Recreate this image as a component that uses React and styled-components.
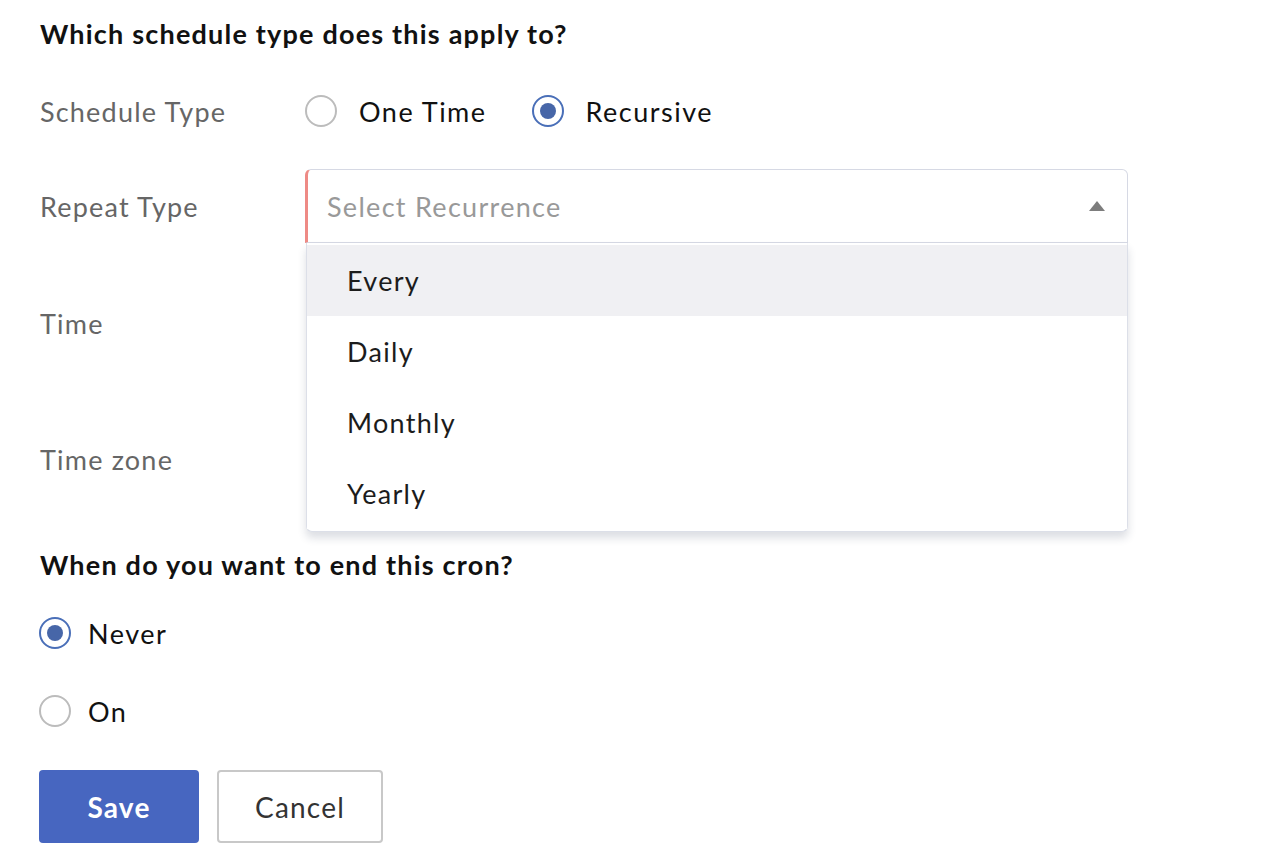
import styled, { createGlobalStyle } from "styled-components";

const GlobalStyle = createGlobalStyle`
  body {
    margin: 0;
    background: #fff;
    font-family: Lato, "Open Sans", sans-serif;
    color: #111;
  }
`;

const Page = styled.div`
  padding: 19px 40px 0 40px;
  display: flex;
  flex-direction: column;
`;

const Heading = styled.h2`
  margin: ${(p) => p.$mt || 0}px 0 0 0;
  font-size: 27px;
  letter-spacing: 1.2px;
  line-height: 30px;
  font-weight: 700;
  color: #111;
`;

const Row = styled.div`
  display: flex;
  align-items: center;
  margin-top: ${(p) => p.$mt}px;
  min-height: ${(p) => p.$h}px;
`;

const Label = styled.div`
  width: 265px;
  flex-shrink: 0;
  font-size: 27px;
  letter-spacing: 1.2px;
  color: #666;
`;

const RadioGroup = styled.div`
  display: flex;
  align-items: center;
  gap: 45px;
`;

const RadioItem = styled.label`
  display: flex;
  align-items: center;
  gap: ${(p) => p.$gap}px;
  font-size: 27px;
  letter-spacing: 1.5px;
  color: #111;
  margin-left: ${(p) => p.$ml || 0}px;
`;

const RadioCircle = styled.span`
  width: 32px;
  height: 32px;
  box-sizing: border-box;
  border-radius: 50%;
  border: 2px solid ${(p) => (p.$checked ? "#4a6fb8" : "#bcbcbc")};
  display: flex;
  align-items: center;
  justify-content: center;
  &::after {
    content: "";
    width: 16px;
    height: 16px;
    border-radius: 50%;
    background: #4766a8;
    display: ${(p) => (p.$checked ? "block" : "none")};
  }
`;

const SelectWrap = styled.div`
  position: relative;
  width: 823px;
`;

const SelectBox = styled.div`
  height: 74px;
  box-sizing: border-box;
  border: 1px solid #d6d9e4;
  border-left: 3px solid #ee8a85;
  border-radius: 6px 6px 0 0;
  display: flex;
  align-items: center;
  justify-content: space-between;
  padding: 0 22px 0 19px;
  font-size: 27px;
  letter-spacing: 1.3px;
  color: #999;
`;

const Caret = styled.span`
  width: 0;
  height: 0;
  border-left: 8px solid transparent;
  border-right: 8px solid transparent;
  border-bottom: 10px solid #7d7d7d;
`;

const Menu = styled.ul`
  position: absolute;
  top: 74px;
  left: 1px;
  right: 0;
  margin: 0;
  padding: 2px 0;
  list-style: none;
  background: #fff;
  border: 1px solid #dcdfe8;
  border-top: none;
  border-radius: 0 0 6px 6px;
  box-shadow: 0 6px 8px rgba(40, 50, 80, 0.16);
  z-index: 5;
`;

const MenuItem = styled.li`
  height: 71px;
  display: flex;
  align-items: center;
  padding-left: 40px;
  font-size: 27px;
  letter-spacing: 1.3px;
  color: #1c1c1c;
  background: ${(p) => (p.$active ? "#f0f0f3" : "#fff")};
`;

const ButtonRow = styled.div`
  display: flex;
  gap: 18px;
  margin-top: 39px;
  margin-left: -1px;
`;

const Button = styled.button`
  height: 73px;
  box-sizing: border-box;
  font-family: Lato, "Open Sans", sans-serif;
  font-size: 28px;
  letter-spacing: 1.2px;
  border-radius: 4px;
  cursor: pointer;
  width: ${(p) => p.$w}px;
  background: ${(p) => (p.$primary ? "#4766c0" : "#fff")};
  color: ${(p) => (p.$primary ? "#fff" : "#333")};
  border: ${(p) => (p.$primary ? "none" : "2px solid #c8c8c8")};
  font-weight: ${(p) => (p.$primary ? 700 : 400)};
`;

const Radio = ({ checked, children, ml, gap = 22 }) => (
  <RadioItem $ml={ml} $gap={gap}>
    <RadioCircle $checked={checked} />
    {children}
  </RadioItem>
);

export default function App() {
  const options = ["Every", "Daily", "Monthly", "Yearly"];
  return (
    <>
      <GlobalStyle />
      <Page>
        <Heading>Which schedule type does this apply to?</Heading>
        <Row $mt={42} $h={40}>
          <Label>Schedule Type</Label>
          <RadioGroup>
            <Radio>One Time</Radio>
            <Radio checked>Recursive</Radio>
          </RadioGroup>
        </Row>
        <Row $mt={38} $h={74}>
          <Label>Repeat Type</Label>
          <SelectWrap>
            <SelectBox>
              Select Recurrence
              <Caret />
            </SelectBox>
            <Menu>
              {options.map((o, i) => (
                <MenuItem key={o} $active={i === 0}>
                  {o}
                </MenuItem>
              ))}
            </Menu>
          </SelectWrap>
        </Row>
        <Row $mt={43} $h={74}>
          <Label>Time</Label>
        </Row>
        <Row $mt={62} $h={74}>
          <Label>Time zone</Label>
        </Row>
        <Heading $mt={54}>When do you want to end this cron?</Heading>
        <Row $mt={33} $h={40}>
          <Radio ml={-1} gap={17} checked>
            Never
          </Radio>
        </Row>
        <Row $mt={38} $h={40}>
          <Radio ml={-1} gap={17}>
            On
          </Radio>
        </Row>
        <ButtonRow>
          <Button $primary $w={160}>
            Save
          </Button>
          <Button $w={166}>Cancel</Button>
        </ButtonRow>
      </Page>
    </>
  );
}
